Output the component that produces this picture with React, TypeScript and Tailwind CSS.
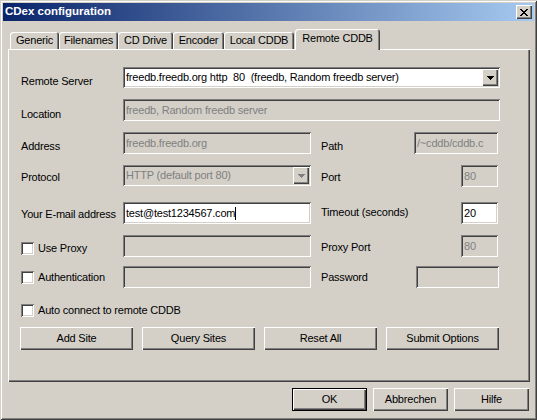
import type { ReactNode } from 'react';

const SUNKEN =
  'shadow-[inset_1px_1px_0_#808080,inset_-1px_-1px_0_#ffffff,inset_2px_2px_0_#404040,inset_-2px_-2px_0_#d4d0c8]';
const RAISED = 'shadow-[inset_1px_1px_0_#ffffff,inset_-1px_-1px_0_#404040,inset_-2px_-2px_0_#808080]';

function Edit({
  value = '',
  disabled,
  caret,
  className = '',
}: {
  value?: string;
  disabled?: boolean;
  caret?: boolean;
  className?: string;
}) {
  return (
    <div
      className={`${SUNKEN} ${
        disabled ? 'bg-[#d4d0c8] text-[#808080]' : 'bg-white text-black'
      } h-[22px] flex items-center pl-[3px] pr-[2px] overflow-hidden whitespace-pre ${className}`}
    >
      {value}
      {caret && <span className="w-px h-[13px] bg-black" />}
    </div>
  );
}

function Arrow({ color }: { color: string }) {
  return (
    <svg width="7" height="4" viewBox="0 0 7 4" shapeRendering="crispEdges">
      <path d="M0 0h7v1h-1v1h-1v1h-1v1h-1v-1h-1v-1h-1v-1h-1z" fill={color} />
    </svg>
  );
}

function Combo({ value, disabled, className = '' }: { value: string; disabled?: boolean; className?: string }) {
  return (
    <div
      className={`${SUNKEN} h-[21px] flex items-center p-[2px] ${
        disabled ? 'bg-[#d4d0c8] text-[#808080]' : 'bg-white text-black'
      } ${className}`}
    >
      <span className="flex-1 pl-px whitespace-pre overflow-hidden">{value}</span>
      <span className={`${RAISED} bg-[#d4d0c8] w-[16px] h-[17px] flex items-center justify-center`}>
        <Arrow color={disabled ? '#808080' : '#000000'} />
      </span>
    </div>
  );
}

function Check({ label }: { label: string }) {
  return (
    <div className="flex items-center gap-[4px] whitespace-nowrap">
      <span className={`${SUNKEN} bg-white w-[13px] h-[13px] shrink-0`} />
      <span>{label}</span>
    </div>
  );
}

function Btn({ children, def, className = '' }: { children: ReactNode; def?: boolean; className?: string }) {
  if (def) {
    return (
      <div className={`border border-black ${className}`}>
        <div className={`${RAISED} h-full flex items-center justify-center`}>{children}</div>
      </div>
    );
  }
  return <div className={`${RAISED} flex items-center justify-center ${className}`}>{children}</div>;
}

function Tab({ label, className = '' }: { label: string; className?: string }) {
  return (
    <div
      className={`shadow-[inset_1px_1px_0_#ffffff,inset_-1px_0_0_#404040,inset_-2px_0_0_#808080] rounded-t-[3px] bg-[#d4d0c8] flex items-center justify-center whitespace-nowrap ${className}`}
    >
      {label}
    </div>
  );
}

// pixel X of the classic close box
const CLOSE_X =
  'M0 0h2v1h-2zM6 0h2v1h-2zM1 1h2v1h-2zM5 1h2v1h-2zM2 2h4v1h-4zM3 3h2v1h-2zM2 4h4v1h-4zM1 5h2v1h-2zM5 5h2v1h-2zM0 6h2v1h-2zM6 6h2v1h-2z';

export default function App() {
  return (
    <div className="w-[537px] h-[420px] bg-[#d4d0c8] p-[3px] flex flex-col text-[11px] tracking-[-0.2px] text-black font-['Liberation_Sans',Arial,sans-serif] shadow-[inset_1px_1px_0_#d4d0c8,inset_-1px_-1px_0_#404040,inset_2px_2px_0_#ffffff,inset_-2px_-2px_0_#808080]">
      {/* Title bar */}
      <div className="h-[18px] shrink-0 flex items-center justify-between pl-[2px] pr-[2px] bg-[linear-gradient(to_right,#0a246a,#a6caf0)]">
        <span className="text-white font-bold text-[11.5px] tracking-normal leading-none">CDex configuration</span>
        <span className={`${RAISED} bg-[#d4d0c8] w-[16px] h-[14px] flex items-center justify-center`}>
          <svg width="8" height="7" viewBox="0 0 8 7" shapeRendering="crispEdges">
            <path d={CLOSE_X} fill="#000000" />
          </svg>
        </span>
      </div>

      {/* Tabs */}
      <div className="mt-[8px] h-[20px] shrink-0 flex items-end ml-[7px]">
        <Tab label="Generic" className="w-[49px] h-[17px]" />
        <Tab label="Filenames" className="w-[59px] h-[17px]" />
        <Tab label="CD Drive" className="w-[55px] h-[17px]" />
        <Tab label="Encoder" className="w-[51px] h-[17px]" />
        <Tab label="Local CDDB" className="w-[70px] h-[17px]" />
        <Tab label="Remote CDDB" className="w-[85px] h-[21px] -mb-px ml-px pb-[3px] relative z-10" />
      </div>

      {/* Panel */}
      <div className="ml-[5px] w-[522px] h-[333px] shrink-0 pt-[18px] pl-[13px] flex flex-col shadow-[inset_1px_1px_0_#ffffff,inset_-1px_-1px_0_#404040,inset_-2px_-2px_0_#808080]">
        <div className="flex items-center h-[21px] w-[479px]">
          <span className="w-[102px] pt-[8px]">Remote Server</span>
          <Combo value="freedb.freedb.org http  80  (freedb, Random freedb server)" className="w-[377px]" />
        </div>

        <div className="flex items-center h-[22px] w-[479px] mt-[11px]">
          <span className="w-[102px] pt-[9px]">Location</span>
          <Edit value="freedb, Random freedb server" disabled className="w-[377px]" />
        </div>

        <div className="flex items-center h-[22px] w-[479px] mt-[11px]">
          <span className="w-[102px] pt-[6px]">Address</span>
          <Edit value="freedb.freedb.org" disabled className="w-[188px]" />
          <span className="flex-1 ml-[10px] pt-[6px]">Path</span>
          <Edit value="/~cddb/cddb.c" disabled className="w-[84px] mr-[2px]" />
        </div>

        <div className="flex items-center h-[22px] w-[479px] mt-[11px]">
          <span className="w-[102px] pt-[2px]">Protocol</span>
          <Combo value="HTTP (default port 80)" disabled className="w-[188px] self-start" />
          <span className="flex-1 ml-[10px] pt-[2px]">Port</span>
          <Edit value="80" disabled className="w-[37px] mr-[2px]" />
        </div>

        <div className="flex items-center h-[22px] w-[479px] mt-[15px]">
          <span className="w-[102px] pt-[2px] whitespace-nowrap">Your E-mail address</span>
          <Edit value="test@test1234567.com" caret className="w-[188px]" />
          <span className="flex-1 ml-[10px] pb-[2px]">Timeout (seconds)</span>
          <Edit value="20" className="w-[37px] mr-[2px]" />
        </div>

        <div className="flex items-center h-[22px] w-[479px] mt-[11px]">
          <div className="w-[102px] pt-[4px]">
            <Check label="Use Proxy" />
          </div>
          <Edit disabled className="w-[188px]" />
          <span className="flex-1 ml-[10px] pt-[2px]">Proxy Port</span>
          <Edit value="80" disabled className="w-[37px] mr-[2px]" />
        </div>

        <div className="flex items-center h-[22px] w-[479px] mt-[9px]">
          <div className="w-[102px]">
            <Check label="Authentication" />
          </div>
          <Edit disabled className="w-[188px]" />
          <span className="flex-1 ml-[10px]">Password</span>
          <Edit disabled className="w-[83px] mr-px" />
        </div>

        <div className="flex items-center h-[13px] mt-[16px]">
          <Check label="Auto connect to remote CDDB" />
        </div>

        <div className="flex gap-[9px] h-[23px] mt-[10px] -ml-px">
          <Btn className="w-[113px]">Add Site</Btn>
          <Btn className="w-[113px]">Query Sites</Btn>
          <Btn className="w-[113px]">Reset All</Btn>
          <Btn className="w-[113px]">Submit Options</Btn>
        </div>
      </div>

      {/* Dialog buttons */}
      <div className="mt-[6px] h-[23px] flex justify-end gap-[6px] pr-[5px]">
        <Btn def className="w-[75px]">
          OK
        </Btn>
        <Btn className="w-[75px]">Abbrechen</Btn>
        <Btn className="w-[75px]">Hilfe</Btn>
      </div>
    </div>
  );
}
